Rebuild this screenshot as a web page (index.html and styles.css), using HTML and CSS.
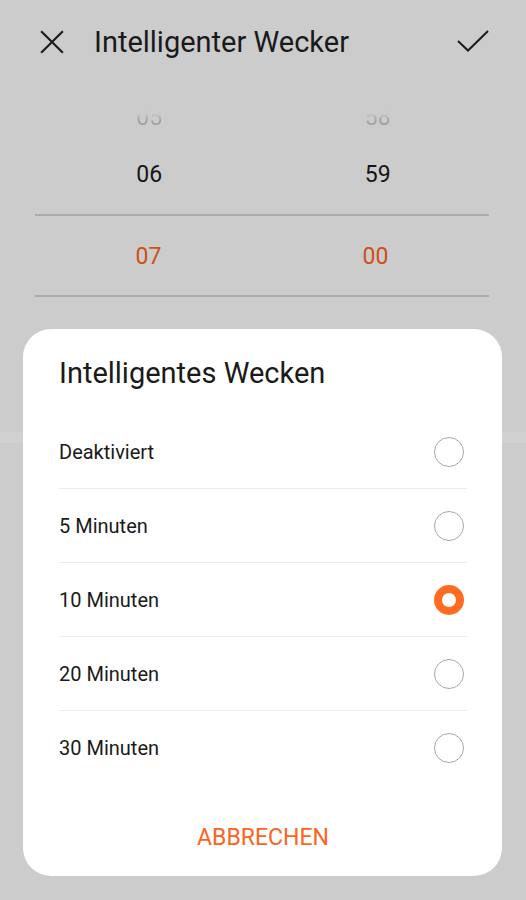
FILE: index.html
```html
<!DOCTYPE html>
<html lang="de">
<head>
<meta charset="utf-8">
<link rel="stylesheet" href="styles.css">
</head>
<body>
<div class="screen">
  <header class="topbar">
    <svg class="icon icon-close" viewBox="0 0 24 24" width="26" height="26"><path d="M2 2 L22 22 M22 2 L2 22" fill="none" stroke="#1c1c1c" stroke-width="2"/></svg>
    <h1 class="title">Intelligenter Wecker</h1>
    <svg class="icon icon-check" viewBox="0 0 32 22" width="32" height="22"><path d="M1 11 L11 20.5 L31 1" fill="none" stroke="#1c1c1c" stroke-width="2"/></svg>
  </header>

  <section class="picker">
    <div class="prow prow-faded"><span>05</span><span>58</span></div>
    <div class="prow prow-near"><span>06</span><span>59</span></div>
    <div class="prow prow-selected"><span>07</span><span>00</span></div>
  </section>

  <div class="band"></div>

  <div class="dialog">
    <h2 class="dialog-title">Intelligentes Wecken</h2>
    <ul class="options">
      <li class="option"><span>Deaktiviert</span><span class="radio"></span></li>
      <li class="option"><span>5 Minuten</span><span class="radio"></span></li>
      <li class="option"><span>10 Minuten</span><span class="radio radio-on"></span></li>
      <li class="option"><span>20 Minuten</span><span class="radio"></span></li>
      <li class="option"><span>30 Minuten</span><span class="radio"></span></li>
    </ul>
    <div class="actions"><span class="cancel">ABBRECHEN</span></div>
  </div>
</div>
</body>
</html>
```

FILE: styles.css
```css
* { box-sizing: border-box; margin: 0; padding: 0; }
html, body { width: 526px; height: 900px; overflow: hidden; }
body {
  background: #cccccc;
  font-family: Roboto, "Noto Sans", sans-serif;
  color: #1a1a1a;
}
.screen { position: relative; width: 526px; height: 900px; }

.topbar {
  height: 84px;
  display: flex;
  align-items: center;
  padding: 0 37px 0 39px;
}
.icon-close { flex: none; }
.title {
  font-weight: 400;
  font-size: 29px;
  color: #1a1a1a;
  margin-left: 29px;
  flex: 1;
}
.icon-check { flex: none; margin-top: -2px; }

.picker {
  margin: 0 34px 0 35px;
  display: flex;
  flex-direction: column;
}
.prow {
  display: grid;
  grid-template-columns: 1fr 1fr;
  text-align: center;
  font-size: 23px;
}
.prow-faded {
  height: 20px;
  margin-top: 22px;
  line-height: 24px;
}
.prow-faded span {
  display: block;
  justify-self: center;
  background: linear-gradient(to bottom, #cdcdcd 0%, #cbcbcb 30%, #a8a8a8 55%, #999 90%);
  -webkit-background-clip: text;
  background-clip: text;
  color: transparent;
}
.prow-near {
  height: 88px;
  color: #151515;
  align-items: start;
  line-height: 1;
}
.prow-near span { padding-top: 37px; }
.prow-selected {
  height: 83px;
  line-height: 81px;
  border-top: 2px solid #acacac;
  border-bottom: 2px solid #acacac;
  margin-right: 3px;
  color: #cf4f17;
}

.band {
  height: 11px;
  margin-top: 135px;
  background: #d1d1d1;
}

.dialog {
  position: absolute;
  left: 23px;
  top: 329px;
  width: 479px;
  height: 547px;
  background: #fff;
  border-radius: 28px;
  padding: 0 35px 0 36px;
  display: flex;
  flex-direction: column;
}
.dialog-title {
  font-weight: 400;
  font-size: 29px;
  line-height: 40px;
  padding-top: 24px;
  height: 86px;
  color: #1a1a1a;
}
.options { list-style: none; }
.option {
  height: 74px;
  display: flex;
  align-items: center;
  justify-content: space-between;
  font-size: 20px;
  color: #1a1a1a;
  border-bottom: 1px solid #ececec;
  padding-right: 3px;
}
.option:last-child { border-bottom: none; height: 73px; }
.radio {
  width: 30px;
  height: 30px;
  border-radius: 50%;
  border: 1.6px solid #a8a8a8;
}
.radio-on {
  border: 8px solid #ff6b21;
}
.actions {
  flex: 1;
  display: flex;
  justify-content: center;
  padding-top: 34px;
}
.cancel {
  font-size: 23px;
  line-height: 40px;
  height: 40px;
  color: #ff6320;
}
```
